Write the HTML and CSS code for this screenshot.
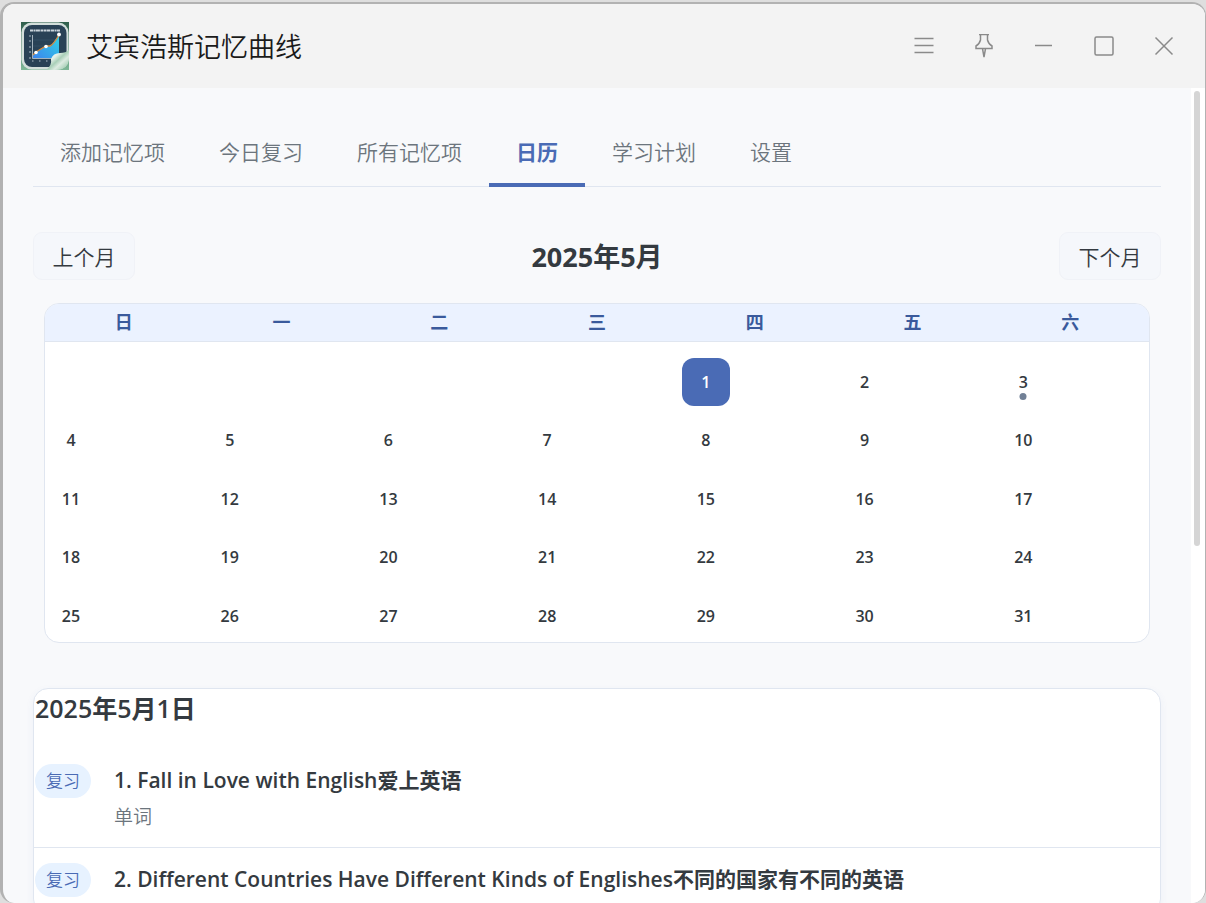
FILE: index.html
```html
<!DOCTYPE html>
<html lang="zh-CN">
  <head>
    <meta charset="UTF-8" />
    <meta name="viewport" content="width=device-width, initial-scale=1.0" />
    <title>艾宾浩斯记忆曲线</title>
    <link rel="stylesheet" href="styles.css">
  </head>
  <body>
    <div class="window">
      <header class="titlebar">
        <svg class="app-icon" viewBox="0 0 48 48">
          <defs>
            <linearGradient id="area" x1="1" y1="0" x2="0" y2="1">
              <stop offset="0" stop-color="#2fd3e6" />
              <stop offset="1" stop-color="#3c86ee" />
            </linearGradient>
            <linearGradient id="curl" x1="0" y1="0" x2="1" y2="1">
              <stop offset="0" stop-color="#f4f8f4" />
              <stop offset="0.35" stop-color="#e4f0e8" />
              <stop offset="0.5" stop-color="#a9cfb8" />
              <stop offset="0.65" stop-color="#dcebe1" />
              <stop offset="1" stop-color="#86bd9c" />
            </linearGradient>
            <linearGradient id="back" x1="0" y1="0" x2="0" y2="1">
              <stop offset="0" stop-color="#2f5f4c" />
              <stop offset="1" stop-color="#7fb898" />
            </linearGradient>
          </defs>
          <rect width="48" height="48" fill="url(#back)" />
          <rect x="0.5" y="0.5" width="47" height="47" rx="10" fill="#d3dfdb" />
          <rect x="3" y="3" width="42.5" height="42" rx="8" fill="#294256" />
          <path d="M9 8.500h30" stroke="#c9d3da" stroke-width="2" stroke-dasharray="3 .5 2 .4 4 .6" />
          <path d="M12 18h26M12 24h26M12 30h26" stroke="#3a556b" stroke-width=".6" />
          <path d="M12 36V33l3-3 10-6h5l8-11v23z" fill="url(#area)" />
          <path d="M12 33l3-3 10-6h4q3-1 9-11" fill="none" stroke="#d08a42" stroke-width="1.4" />
          <path d="M11.500 13v23.500H36" fill="none" stroke="#c5d0d8" stroke-width=".8" />
          <path d="M8 14h2M8 19h2M8 25h2M8 30h2M8 36h2M11 39h1.500M18 39h1.500M25 39h1.500" stroke="#aebcc6" stroke-width="1.2" />
          <circle cx="15" cy="30.5" r="1.8" fill="#fff" />
          <circle cx="25" cy="24.5" r="1.8" fill="#fff" />
          <circle cx="38" cy="12.5" r="1.9" fill="#fff" />
          <path d="M26 47q5-4 4-10 2-6 9-6 6 0 9-3v10q-1 9-12 10h-10z" fill="url(#curl)" />
        </svg>
        <h1 class="app-name">艾宾浩斯记忆曲线</h1>
        <div class="window-controls">
          <button class="control" aria-label="菜单">
            <svg viewBox="0.5 1 24 24"><path d="M3 5.500h19M3 12.500h19M3 19.500h19" /></svg>
          </button>
          <button class="control" aria-label="置顶">
            <svg viewBox="0.5 1 24 24"><path d="M7.500 1.500h10M9 1.700V7Q8 11 4.500 13V15.500h16V13Q17 11 16 7V1.700M11 15.700l1.500 8.300 1.500-8.300" /></svg>
          </button>
          <button class="control" aria-label="最小化">
            <svg viewBox="0.5 1 24 24"><path d="M3.500 12.500h17" /></svg>
          </button>
          <button class="control" aria-label="最大化">
            <svg viewBox="0.5 1 24 24"><rect x="3.5" y="4" width="18" height="18" rx="1.5" /></svg>
          </button>
          <button class="control" aria-label="关闭">
            <svg viewBox="0.5 1 24 24"><path d="M4 4.500l17 17M21 4.500l-17 17" /></svg>
          </button>
        </div>
      </header>

      <div class="viewport">
        <main class="content">
          <nav class="tabs">
            <button class="tab">添加记忆项</button>
            <button class="tab">今日复习</button>
            <button class="tab">所有记忆项</button>
            <button class="tab active">日历</button>
            <button class="tab">学习计划</button>
            <button class="tab">设置</button>
          </nav>

          <div class="month-nav">
            <button class="month-btn">上个月</button>
            <h2 class="month-title">2025年5月</h2>
            <button class="month-btn">下个月</button>
          </div>

          <section class="calendar">
            <div class="weekdays">
              <span>日</span>
              <span>一</span>
              <span>二</span>
              <span>三</span>
              <span>四</span>
              <span>五</span>
              <span>六</span>
            </div>
            <div class="days">
              <button class="day first selected">1</button>
              <button class="day">2</button>
              <button class="day has-items">3</button>
              <button class="day">4</button>
              <button class="day">5</button>
              <button class="day">6</button>
              <button class="day">7</button>
              <button class="day">8</button>
              <button class="day">9</button>
              <button class="day">10</button>
              <button class="day">11</button>
              <button class="day">12</button>
              <button class="day">13</button>
              <button class="day">14</button>
              <button class="day">15</button>
              <button class="day">16</button>
              <button class="day">17</button>
              <button class="day">18</button>
              <button class="day">19</button>
              <button class="day">20</button>
              <button class="day">21</button>
              <button class="day">22</button>
              <button class="day">23</button>
              <button class="day">24</button>
              <button class="day">25</button>
              <button class="day">26</button>
              <button class="day">27</button>
              <button class="day">28</button>
              <button class="day">29</button>
              <button class="day">30</button>
              <button class="day">31</button>
            </div>
          </section>

          <section class="day-details">
            <h3 class="day-title">2025年5月1日</h3>
            <ul class="items">
              <li class="item">
                <span class="badge">复习</span>
                <div>
                  <div class="item-title">1. Fall in Love with English爱上英语</div>
                  <div class="item-category">单词</div>
                </div>
              </li>
              <li class="item">
                <span class="badge">复习</span>
                <div>
                  <div class="item-title">2. Different Countries Have Different Kinds of Englishes不同的国家有不同的英语</div>
                </div>
              </li>
            </ul>
          </section>
        </main>
        <div class="scrollbar"><div class="thumb"></div></div>
      </div>
    </div>
  </body>
</html>
```

FILE: styles.css
```css
* {
  box-sizing: border-box;
}

body {
  margin: 0;
  height: 100vh;
  padding-top: 2px;
  overflow: hidden;
  background: #dedede;
  color: #343a40;
  font-family: "Open Sans", "Noto Sans CJK SC", sans-serif;
}

h1,
h2,
h3,
ul {
  margin: 0;
  padding: 0;
}

button {
  border: none;
  padding: 0;
  background: none;
  color: inherit;
  font-family: inherit;
  cursor: pointer;
}

.window {
  display: flex;
  flex-direction: column;
  height: 100%;
  border: 2px solid #b2b2b2;
  border-width: 2px 1px 0 3px;
  border-radius: 14px;
  overflow: hidden;
  background: #f8f9fb;
}

.titlebar {
  display: flex;
  align-items: center;
  flex-shrink: 0;
  height: 84px;
  padding: 0 11px 0 18px;
  background: #f3f3f3;
}

.app-icon {
  width: 48px;
  height: 48px;
}

.app-name {
  padding-top: 2px;
  margin-left: 17px;
  color: #1a1a1a;
  font-size: 27px;
  font-weight: 350;
  line-height: 40px;
}

.window-controls {
  display: flex;
  margin-left: auto;
}

.control {
  display: flex;
  align-items: center;
  justify-content: center;
  width: 60px;
  height: 60px;
}

.control svg {
  width: 24px;
  height: 24px;
  fill: none;
  stroke: #8a8a8a;
  stroke-width: 1.5;
}

.viewport {
  display: flex;
  flex: 1;
  min-height: 0;
}

.content {
  flex: 1;
  min-width: 0;
  padding: 30px 30px 0;
}

.scrollbar {
  width: 14px;
  padding: 3px 5px 0 3px;
  background: #fff;
}

.thumb {
  height: 56%;
  border-radius: 3px;
  background: #d5d5d5;
}

.tabs {
  display: flex;
  height: 69px;
  border-bottom: 1px solid #e0e6f0;
}

.tab {
  height: 69px;
  padding: 2px 27px 0;
  border-bottom: 4px solid transparent;
  color: #6c757d;
  font-size: 21px;
  font-weight: 350;
  line-height: 30px;
}

.tab.active {
  border-color: #4a6bb5;
  color: #4a6bb5;
  font-weight: 700;
}

.month-nav {
  display: flex;
  align-items: center;
  justify-content: space-between;
  margin: 45px 0 23px;
}

.month-btn {
  min-width: 102px;
  height: 48px;
  padding: 0 18px;
  border: 1px solid #f0f2f7;
  border-radius: 9px;
  background: #f5f7fb;
  font-size: 21px;
  font-weight: 350;
}

.month-title {
  padding-top: 2px;
  font-size: 27px;
  line-height: 40px;
}

.calendar {
  margin: 0 11px;
  border: 1px solid #e0e6f0;
  border-radius: 15px;
  overflow: hidden;
  background: #fff;
}

.weekdays {
  display: grid;
  grid-template-columns: repeat(7, 1fr);
  border-bottom: 1px solid #e0e6f0;
  background: #ebf2ff;
  color: #3a5a9c;
  font-size: 18px;
  font-weight: 700;
  line-height: 37px;
  text-align: center;
}

.days {
  display: grid;
  grid-template-columns: repeat(7, 1fr);
  grid-template-rows: repeat(5, 1fr);
  gap: 10px 11px;
  min-height: 300px;
  padding: 16px 2px 2px;
}

.day {
  position: relative;
  width: 48px;
  height: 48px;
  border-radius: 12px;
  font-size: 16px;
  font-weight: 600;
}

.day.first {
  grid-column-start: 5;
}

.day.selected {
  background: #4a6bb5;
  color: #fff;
}

.day.has-items::after {
  content: "";
  position: absolute;
  bottom: 6px;
  left: 50%;
  width: 7px;
  height: 7px;
  border-radius: 50%;
  background: #718096;
  transform: translateX(-50%);
}

.day-details {
  margin-top: 45px;
  border: 1px solid #e0e6f0;
  border-radius: 15px;
  background: #fff;
  box-shadow: 0 3px 9px rgba(74, 107, 181, 0.06);
}

.day-title {
  padding: 0 1px;
  font-size: 25px;
  font-weight: 600;
  line-height: 38px;
}

.items {
  margin-top: 22px;
  list-style: none;
}

.item {
  display: flex;
  align-items: flex-start;
  gap: 23px;
  padding: 15px 1px;
  border-bottom: 1px solid #e0e6f0;
}

.badge {
  padding: 0 11px;
  border-radius: 17px;
  background: #e7f2ff;
  color: #4a6bb5;
  font-size: 17px;
  font-weight: 350;
  line-height: 34px;
}

.item-title {
  font-size: 21px;
  font-weight: 600;
  line-height: 32px;
}

.item-category {
  margin-top: 6px;
  color: #6c757d;
  font-size: 19px;
  font-weight: 350;
  line-height: 30px;
}
```
